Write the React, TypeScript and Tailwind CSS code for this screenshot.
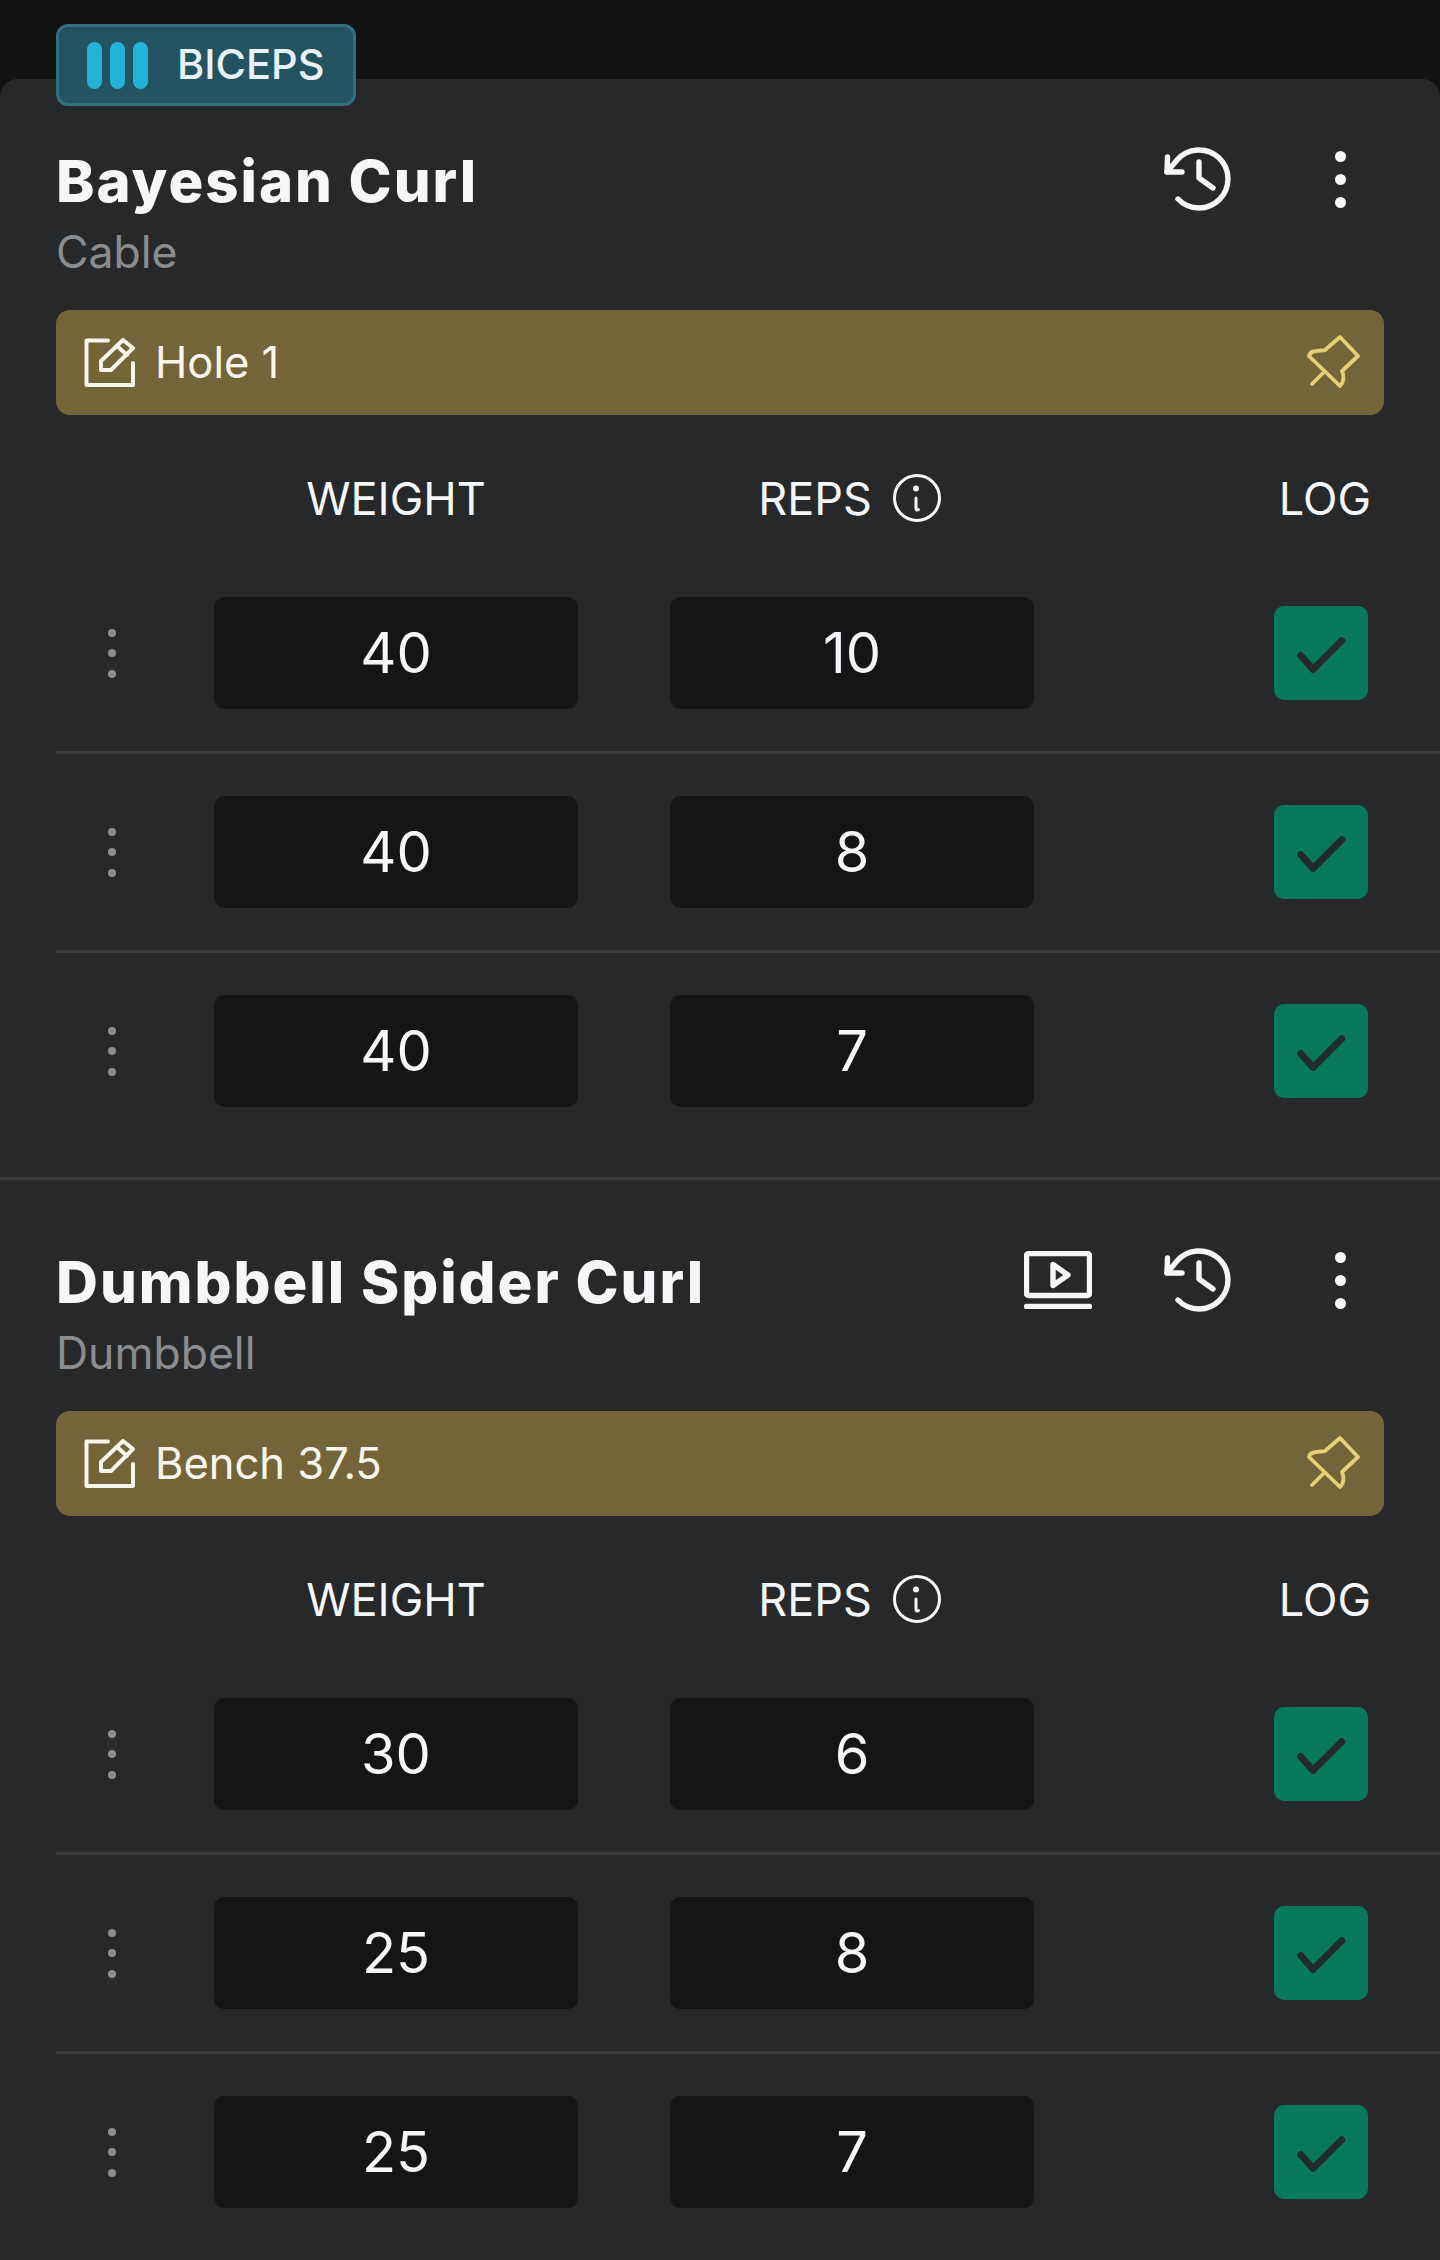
import React from "react";

const FONT = "[font-family:Inter,'Liberation_Sans',sans-serif]";

function HistoryIcon() {
  return (
    <svg width="70" height="70" viewBox="0 0 70 70" fill="none" stroke="#f5f6f8" strokeWidth="5.4" strokeLinecap="round" strokeLinejoin="round">
      <path d="M14 55A29 29 0 1 0 13 16L3 28" />
      <path d="M3.5 13L3 28L18 28" />
      <path d="M35 18V34L49 44" />
    </svg>
  );
}

function VideoIcon() {
  return (
    <svg width="68" height="58" viewBox="0 0 68 58" fill="none" stroke="#f5f6f8" strokeWidth="5.4" strokeLinecap="round" strokeLinejoin="round">
      <rect x="2.5" y="2.5" width="63" height="42" rx="2" />
      <path d="M2.5 55.5H65.5" />
      <path d="M29 13.5L44 24L29 34.5Z" />
    </svg>
  );
}

function MoreDots({ size }: { size: "big" | "small" }) {
  const cls = size === "big" ? "w-[11px] h-[11px] rounded-full bg-[#f5f6f8]" : "w-2 h-2 rounded-full bg-[#8d8e90]";
  return (
    <div className={size === "big" ? "flex flex-col gap-[12px]" : "flex flex-col gap-[12.5px]"}>
      <div className={cls} />
      <div className={cls} />
      <div className={cls} />
    </div>
  );
}

function EditIcon() {
  return (
    <svg width="52" height="50" viewBox="13 13 52 50" fill="none" stroke="#f8f5ec" strokeWidth="4" strokeLinecap="round" strokeLinejoin="round">
      <path d="M37 15.5H15.5V60H62V38" />
      <path d="M30 45V36L52 15L62 23L40 45Z" />
      <path d="M46 21L56 30" />
    </svg>
  );
}

function PinIcon() {
  return (
    <svg className="mb-[3px]" width="54" height="54" viewBox="17 8 54 54" fill="none" stroke="#e6cf77" strokeWidth="3.8" strokeLinecap="round" strokeLinejoin="round">
      <path d="M50 11L68 30L52 45C54 50 54 56 50 60L19 30C20 26 24 25 27 25C30 24 33 25 35 24Z" />
      <path d="M33 47L22 58" />
    </svg>
  );
}

function InfoIcon() {
  return (
    <svg width="50" height="50" viewBox="0 0 50 50" fill="none" stroke="#f5f6f8" strokeWidth="3" strokeLinecap="round">
      <circle cx="25" cy="25" r="22.5" />
      <circle cx="24" cy="15.5" r="3" fill="#f5f6f8" stroke="none" />
      <path d="M24 25V35C24 37 25 37.5 26.5 36.5" />
    </svg>
  );
}

function CheckBox() {
  return (
    <div className="ml-auto w-[94px] h-[94px] rounded-[10px] bg-[#067a5b] flex items-center justify-center">
      <svg width="94" height="94" viewBox="0 0 95 95" fill="none" stroke="#232a2a" strokeWidth="7" strokeLinecap="round" strokeLinejoin="round">
        <path d="M27 50L39.5 64L68.5 35" />
      </svg>
    </div>
  );
}

function Field({ value }: { value: string }) {
  return (
    <div className="w-[364px] h-[112px] rounded-[10px] bg-[#141517] flex items-center justify-center text-[56px] leading-none text-[#f5f6f8]">
      {value}
    </div>
  );
}

function SetRow({ weight, reps, last }: { weight: string; reps: string; last?: boolean }) {
  return (
    <div className={last ? "ml-[56px] pr-[72px] py-[42px] flex items-center" : "ml-[56px] pr-[72px] py-[42px] flex items-center border-b-[3px] border-[#3a3b3d]"}>
      <div className="w-[158px] pl-[52px]">
        <MoreDots size="small" />
      </div>
      <Field value={weight} />
      <div className="w-[92px]" />
      <Field value={reps} />
      <CheckBox />
    </div>
  );
}

function Exercise({
  name,
  kind,
  note,
  video,
  sets,
  last,
}: {
  name: string;
  kind: string;
  note: string;
  video?: boolean;
  sets: [string, string][];
  last?: boolean;
}) {
  return (
    <section className={last ? "pt-[72px]" : "pt-[72px] pb-[28px] border-b-[3px] border-[#3a3b3d]"}>
      <div className="px-[56px]">
        <div className="flex items-start justify-between">
          <div>
            <h2 className="text-[58px] leading-[60px] font-extrabold text-[#f5f6f8] tracking-[2px]">{name}</h2>
            <p className="mt-[16px] text-[44.5px] leading-[50px] text-[#8b8c8e]">{kind}</p>
          </div>
          <div className="flex items-center mt-[-7px] mr-[38px] h-[70px]">
            {video && (
              <div className="mr-[72px]">
                <VideoIcon />
              </div>
            )}
            <HistoryIcon />
            <div className="ml-[101px]">
              <MoreDots size="big" />
            </div>
          </div>
        </div>
        <div className="mt-[33px] h-[105px] rounded-[14px] bg-[#736539] pl-[28px] pr-[23px] flex items-center justify-between">
          <div className="flex items-center gap-[19px]">
            <EditIcon />
            <span className="text-[43.5px] leading-none text-[#f8f5ec]">{note}</span>
          </div>
          <PinIcon />
        </div>
      </div>
      <div className="ml-[56px] pr-[72px] mt-[53px] h-[60px] flex items-center text-[45px] leading-none text-[#f5f6f8]">
        <div className="w-[158px]" />
        <div className="w-[364px] text-center">WEIGHT</div>
        <div className="w-[92px]" />
        <div className="w-[364px] pr-[4px] flex items-center justify-center gap-[20px]">
          <span>REPS</span>
          <InfoIcon />
        </div>
        <div className="ml-auto mr-[-3px]">LOG</div>
      </div>
      <div className="mt-[27px]">
        {sets.map(([w, r], i) => (
          <SetRow key={i} weight={w} reps={r} last={i === sets.length - 1} />
        ))}
      </div>
    </section>
  );
}

export default function App() {
  return (
    <div className={`${FONT} relative w-[1440px] h-[2260px] overflow-hidden bg-[#111214] pt-[79px]`}>
      <div className="absolute left-[56px] top-[24px] z-10 w-[300px] h-[82px] rounded-[12px] bg-[#245461] border-[3px] border-[#326f80] pl-[28px] flex items-center">
        <div className="flex gap-[8px]">
          <div className="w-[15px] h-[47px] rounded-full bg-[#24b3d8]" />
          <div className="w-[15px] h-[47px] rounded-full bg-[#24b3d8]" />
          <div className="w-[15px] h-[47px] rounded-full bg-[#24b3d8]" />
        </div>
        <span className="ml-[29px] text-[41.5px] leading-none font-medium text-[#e8f2f6]">BICEPS</span>
      </div>
      <div className="h-full rounded-t-[18px] bg-[#27282a]">
        <Exercise
          name="Bayesian Curl"
          kind="Cable"
          note="Hole 1"
          sets={[
            ["40", "10"],
            ["40", "8"],
            ["40", "7"],
          ]}
        />
        <Exercise
          name="Dumbbell Spider Curl"
          kind="Dumbbell"
          note="Bench 37.5"
          video
          last
          sets={[
            ["30", "6"],
            ["25", "8"],
            ["25", "7"],
          ]}
        />
      </div>
    </div>
  );
}
